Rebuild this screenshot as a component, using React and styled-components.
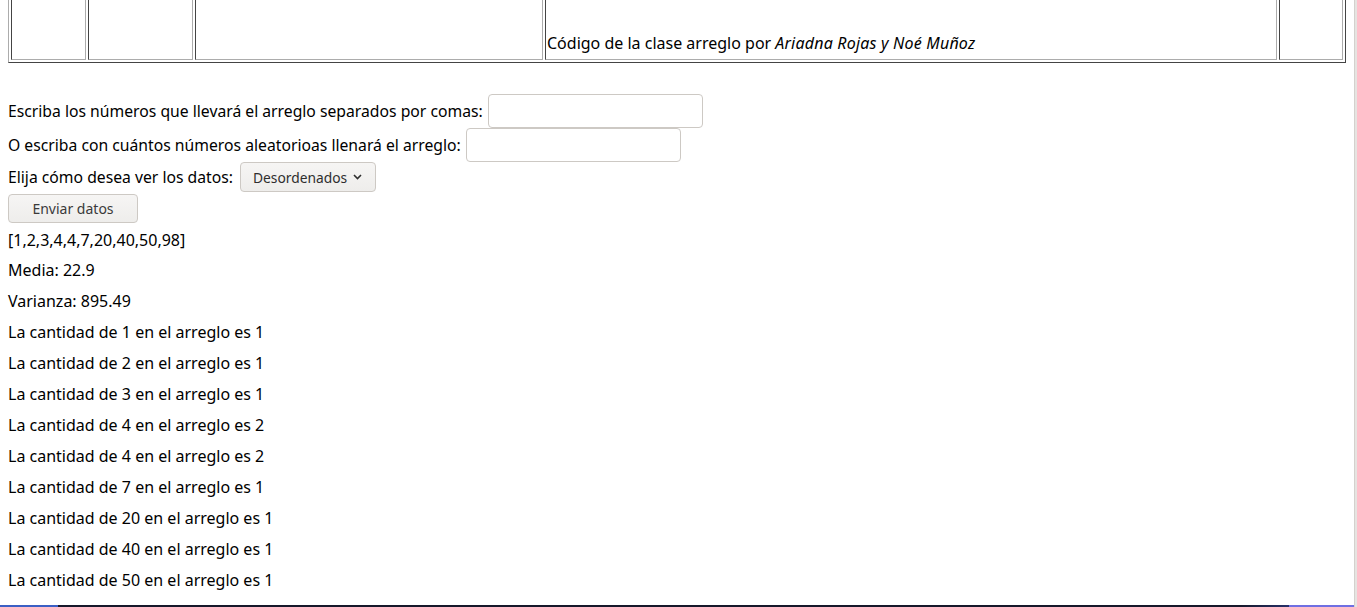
import React from "react";
import styled, { createGlobalStyle } from "styled-components";

const GlobalStyle = createGlobalStyle`
  html, body {
    margin: 0;
    padding: 0;
    overflow: hidden;
    background: #ffffff;
  }
  body {
    font-family: "Noto Sans", "Open Sans", sans-serif;
    font-size: 16px;
    color: #000;
  }
`;

const Shell = styled.div`
  display: flex;
  width: 100%;
  height: 607px;
`;

const Viewport = styled.div`
  flex: 1;
  display: flex;
  flex-direction: column;
  min-width: 0;
`;

const Scrollbar = styled.div`
  width: 3px;
  background: #e6e4e1;
  border-left: 1px solid #d4d1cd;
  box-sizing: border-box;
`;

const Content = styled.div`
  flex: 1;
  padding: 0 8px;
`;

const BottomStrip = styled.div`
  height: 2px;
  background: linear-gradient(
    90deg,
    #3b5fc4 0px,
    #3b5fc4 58px,
    #16182a 58px,
    #16182a 1240px,
    #26306a 1289px,
    #6f6fe2 1289px,
    #6f6fe2 100%
  );
`;

const CreditTable = styled.div`
  display: grid;
  grid-template-columns: 75px 105px 348px 732px 64px;
  column-gap: 2px;
  padding: 0 2px 2px 2px;
  border-left: 1px solid #acacac;
  border-right: 1px solid #444444;
  border-bottom: 1px solid #444444;
`;

const Cell = styled.div`
  height: 60px;
  box-sizing: border-box;
  border-left: 1px solid #444444;
  border-right: 1px solid #acacac;
  border-bottom: 1px solid #acacac;
  padding: 0 1px 5px 1px;
  display: flex;
  align-items: flex-end;
  font-size: 16px;
  line-height: 22px;
`;

const Authors = styled.i`
  letter-spacing: 0.2px;
`;

const Form = styled.form`
  margin-top: 31px;
  display: flex;
  flex-direction: column;
  align-items: flex-start;
`;

const FormRow = styled.div`
  display: flex;
  align-items: center;
  gap: ${(p) => p.$gap || 5}px;
  padding-bottom: ${(p) => p.$after || 0}px;
`;

const Label = styled.label`
  white-space: nowrap;
  font-size: 15.73px;
`;

const TextInput = styled.input`
  width: 215px;
  height: 34px;
  box-sizing: border-box;
  border: 1px solid #cdc9c4;
  border-radius: 4px;
  background: #ffffff;
  padding: 0 6px;
  font: inherit;
  margin: 0;
`;

const SelectBox = styled.button`
  width: 136px;
  height: 30px;
  box-sizing: border-box;
  border: 1px solid #cdc9c4;
  border-radius: 4px;
  background: linear-gradient(#f6f5f4, #eeedeb);
  display: flex;
  align-items: center;
  gap: 6px;
  padding: 0 0 0 12px;
  margin: 0;
  font-family: "Noto Sans", "Open Sans", sans-serif;
  font-size: 13.8px;
  color: #2e2e2e;
  cursor: pointer;
`;

const Chevron = styled.svg`
  width: 9px;
  height: 6px;
  flex: none;
`;

const SubmitButton = styled.button`
  width: 130px;
  height: 29px;
  box-sizing: border-box;
  border: 1px solid #cdc9c4;
  border-radius: 4px;
  background: linear-gradient(#f6f5f4, #eeedeb);
  margin: 0;
  padding: 0;
  font-family: "Noto Sans", "Open Sans", sans-serif;
  font-size: 14px;
  color: #3a3a3a;
  cursor: pointer;
`;

const Output = styled.div`
  display: flex;
  flex-direction: column;
  padding-top: 2px;
`;

const OutLine = styled.div`
  line-height: ${(p) => p.$h || 31}px;
  white-space: nowrap;
`;

const counts = [
  [1, 1],
  [2, 1],
  [3, 1],
  [4, 2],
  [4, 2],
  [7, 1],
  [20, 1],
  [40, 1],
  [50, 1],
];

export default function App() {
  return (
    <>
      <GlobalStyle />
      <Shell>
        <Viewport>
          <Content>
            <CreditTable>
              <Cell />
              <Cell />
              <Cell />
              <Cell>
                <span>
                  Código de la clase arreglo por <Authors>Ariadna Rojas y Noé Muñoz</Authors>
                </span>
              </Cell>
              <Cell />
            </CreditTable>

            <Form onSubmit={(e) => e.preventDefault()}>
              <FormRow>
                <Label htmlFor="nums">
                  Escriba los números que llevará el arreglo separados por comas:
                </Label>
                <TextInput id="nums" type="text" />
              </FormRow>
              <FormRow>
                <Label htmlFor="rand">
                  O escriba con cuántos números aleatorioas llenará el arreglo:
                </Label>
                <TextInput id="rand" type="text" />
              </FormRow>
              <FormRow $after={2} $gap={7}>
                <Label>Elija cómo desea ver los datos:</Label>
                <SelectBox type="button">
                  Desordenados
                  <Chevron viewBox="0 0 9 6">
                    <path
                      d="M1 1 L4.5 4.5 L8 1"
                      fill="none"
                      stroke="#2e2e2e"
                      strokeWidth="1.6"
                    />
                  </Chevron>
                </SelectBox>
              </FormRow>
              <SubmitButton type="submit">Enviar datos</SubmitButton>
            </Form>

            <Output>
              <OutLine $h={30}>[1,2,3,4,4,7,20,40,50,98]</OutLine>
              <OutLine>Media: 22.9</OutLine>
              <OutLine>Varianza: 895.49</OutLine>
              {counts.map(([n, c], i) => (
                <OutLine key={i}>
                  La cantidad de {n} en el arreglo es {c}
                </OutLine>
              ))}
            </Output>
          </Content>
          <BottomStrip />
        </Viewport>
        <Scrollbar />
      </Shell>
    </>
  );
}
